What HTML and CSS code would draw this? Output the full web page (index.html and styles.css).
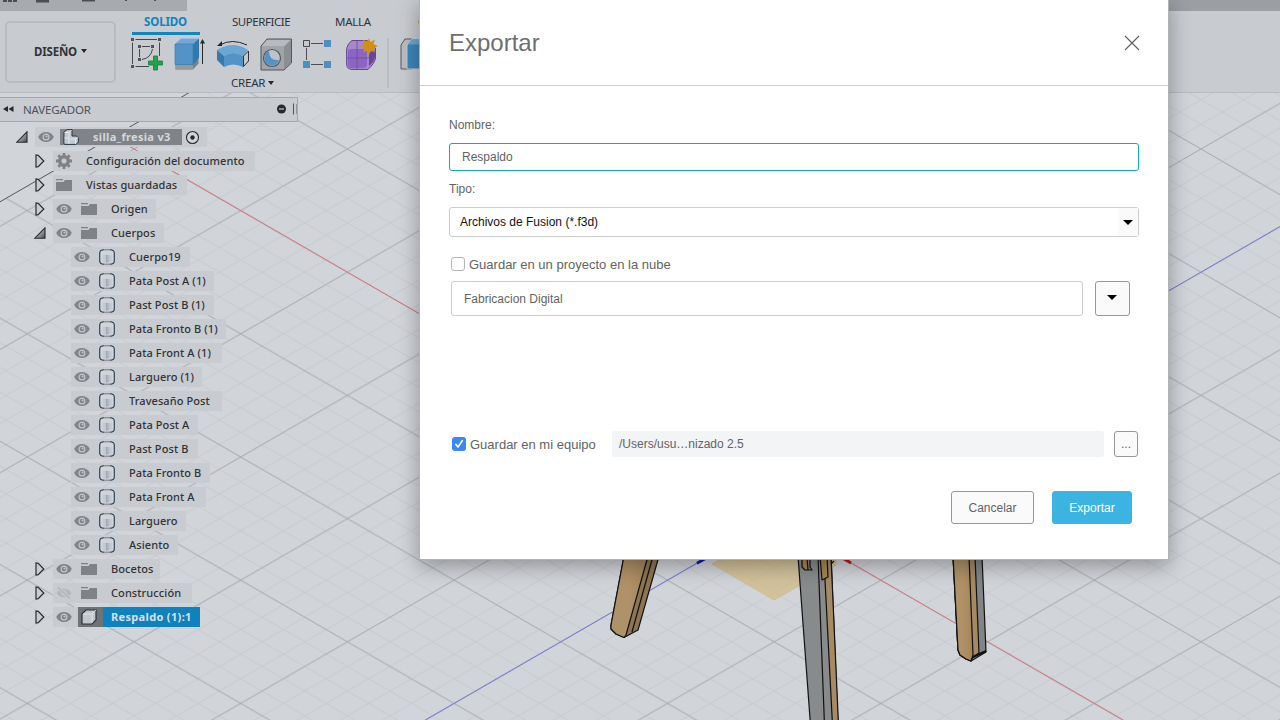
FILE: index.html
```html
<!DOCTYPE html>
<html lang="es">
<head>
<meta charset="utf-8">
<title>silla_fresia v3</title>
<link rel="stylesheet" href="styles.css">
</head>
<body>
<svg class="defs" width="0" height="0">
  <defs>
    <linearGradient id="tri" x1="0" y1="0" x2="1" y2="1"><stop offset=".3" stop-color="#c2c5ca"/><stop offset="1" stop-color="#45484c"/></linearGradient>
    <linearGradient id="cyl" x1="0" x2="1"><stop offset="0" stop-color="#c8ccd2"/><stop offset=".28" stop-color="#c2c6cd"/><stop offset=".3" stop-color="#98a2b0"/><stop offset=".8" stop-color="#c5cad0"/><stop offset="1" stop-color="#c8ccd2"/></linearGradient>
  </defs>
  <symbol id="eye" viewBox="0 0 16 12"><path d="M.2 6C3-.6 13-.6 15.800 6 13 12.600 3 12.600.2 6Z" fill="#808387"/><circle cx="8" cy="6" r="2.900" fill="none" stroke="#c3c6cb" stroke-width="1.200"/><circle cx="8.500" cy="5.500" r="1" fill="#c3c6cb"/></symbol>
  <symbol id="eye-off" viewBox="0 0 16 12"><path d="M.5 6C4 .3 12 .3 15.500 6 12 11.700 4 11.700.5 6Z" fill="#b4b7bb"/><circle cx="8" cy="6" r="2.400" fill="none" stroke="#c8cbd0"/><path d="M2 .5 14 11.500" stroke="#c8cbd0" stroke-width="3"/><path d="M2 .5 14 11.500" stroke="#b0b3b7" stroke-width="1.300"/></symbol>
  <symbol id="folder" viewBox="0 0 16 14"><path d="M0 1h7v1.300H0zM0 4h7.500L9 2h7v11H0z" fill="#7f8387"/></symbol>
  <symbol id="body" viewBox="0 0 16 16"><path d="M.7 3.500C.7 1.500 3 .7 8 .7s7.300.8 7.300 2.800v9c0 2-2.300 2.800-7.300 2.800S.7 14.500.7 12.500Z" fill="#ced3d9"/><path d="M4 5.500h9v8H4z" fill="url(#cyl)"/><path d="M1.500 2.500C1.500 1 14.500 1 14.500 2.500V5C13 6 3 6 1.500 5Z" fill="#d0d5da"/><path d="M5 .8h6M5 15.200h6" stroke="#777b80"/><path d="M5 .8C1.500 1 .7 2.200.7 4v8c0 1.800.8 3 4.300 3.200M11 .8c3.500.2 4.300 1.400 4.300 3.200v8c0 1.800-.8 3-4.300 3.200" fill="none" stroke="#29394a" stroke-width="1.100"/></symbol>
  <symbol id="closed" viewBox="0 0 10 14"><path d="M1 1v12l2.200-.3L8.800 7 3.200 1.300Z" fill="#c9ccd1" stroke="#292b2e" stroke-width="1.200"/></symbol>
  <symbol id="open" viewBox="0 0 12 12"><path d="M11 .8v10.400H.8Z" fill="url(#tri)" stroke="#292b2e" stroke-width="1.100"/></symbol>
</svg>

<svg class="scene" width="1280" height="720" viewBox="0 0 1280 720">
  <defs>
    <pattern id="minor" patternUnits="userSpaceOnUse" x="1201" y="149" width="42.680" height="24.640"><path d="M-10-5.773 53.360 30.810M-10 30.413 53.360-6.170M-10 5.773 10-5.773M32.680 30.413 52.680 18.870M-10 18.870 10 30.413M32.680-5.773 52.680 5.773" stroke="#c2c5c9" stroke-width=".75" fill="none"/></pattern>
    <pattern id="major" patternUnits="userSpaceOnUse" x="1201" y="149" width="213.400" height="123.200"><path d="M0 0 213.400 123.200M0 123.200 213.400 0" stroke="#a0a3a7" stroke-width=".8" fill="none"/></pattern>
    <clipPath id="plane"><path d="M0 201.800 350 0H1280V720H0Z"/></clipPath>
    <linearGradient id="wood"><stop stop-color="#ad926c"/><stop offset=".5" stop-color="#b19167"/><stop offset="1" stop-color="#a1845c"/></linearGradient>
  </defs>
  <g clip-path="url(#plane)">
    <rect width="1280" height="720" fill="url(#minor)"/>
    <rect width="1280" height="720" fill="url(#major)"/>
  </g>
  <path d="M0 201.800 192 91" stroke="#4a4c4f" stroke-width=".9"/>
  <path d="M113 136.800 1122.800 719.900" stroke="#d97277" stroke-width=".9"/>
  <path d="M425.400 720 1280 226.600" stroke="#7073de" stroke-width=".9"/>
  <path d="M697 563.200 708 557" stroke="#1414c4" stroke-width="3"/>
  <path d="M840 556.500 851 563" stroke="#c81414" stroke-width="3"/>
  <path d="M719 560 712 564 774 600 836 565V560Z" fill="#d4b774" opacity=".6" stroke="#d3ae67"/>
  <g stroke="#111" stroke-width="1.200" stroke-linejoin="round">
    <path d="M624 556 611 625 611 629 616 634 624 637.500 638 630 659 556Z" fill="#8e7552"/>
    <path d="M624 556 611 625 611 629 616 634 624 637.500 626 635 648 556Z" fill="url(#wood)"/>
    <path d="M653 556 632 632" fill="none"/>
    <path d="M953 556 958 650 960 655 966 659 971 661 986 652 982 556Z" fill="#828587"/>
    <path d="M953 556 958 650 960 655 966 659 971 661 973 657 979 653 975 556Z" fill="#a6895f"/>
    <path d="M953 556 958 650 960 655 966 659 971 661 973 655 969 556Z" fill="url(#wood)"/>
    <path d="M973 657 986 651" stroke-width="2"/>
    <path d="M798 556 810.500 725H838L831 556Z" fill="#888b8c"/>
    <path d="M825 580 832.500 725H838.500L831 556H826Z" fill="#a78a61"/>
    <path d="M818 556 824.500 725" fill="none"/>
    <path d="M802 556V567L805 570H812L810 567V556ZM820 556 822 580 828 577 827 556Z" fill="#a58653"/>
    <path d="M807 558 808 570M831 564 834 561" fill="none"/>
  </g>
</svg>

<div class="app">
  <div class="titlebar">
    <div class="quick">
      <svg width="187" height="11"><path d="M3 0h4v2H3zM8 0h4v2H8zM13 0h4v2h-4zM36 0h13v2.500H36zM82 0h13v1.500H82zM125 0h2v1h-2zM154 0h2v1h-2z" fill="#4b4d51"/></svg>
    </div>
    <div class="rest"></div>
  </div>
  <div class="ribbon">
    <div class="workspace">DISEÑO <i class="caret"></i></div>
    <div class="tools">
      <div class="tabs"><span class="tab active">SOLIDO</span><span class="tab t2">SUPERFICIE</span><span class="tab t3">MALLA</span><span class="tab t4">C</span></div>
      <div class="icons">
        <svg width="33" height="33" viewBox="0 0 33 33"><path d="M4.500 1.500H26M1.500 4.500V26M28.500 4.500V18M4.500 28.500H18" stroke="#44474b"/><path d="M8.500 11V19M11 8.500H19M21.500 11Q20 20 11 21.500" stroke="#44474b" fill="none"/><path d="M0 0h3v3H0zM27 0h3v3h-3zM0 27h3v3H0zM7 7h3v3H7zM20 7h3v3h-3zM7 20h3v3H7z" fill="#505358"/><path d="M22.500 18h4v5h5v4h-5v5h-4v-5h-5v-4h5z" fill="#26a04e" stroke="#128037" stroke-width=".8"/></svg>
        <svg width="33" height="33" viewBox="0 0 33 33"><path d="M1.500 26v5.500H19l5.500-6V21Z" fill="#7c7f83"/><path d="M1.500 27H19v4.500H1.500z" fill="#969a9e"/><path d="M1 6 7 .5H25L19 6Z" fill="#70a9d7"/><path d="M19 6 25 .5V20l-6 6.500Z" fill="#3178ae"/><path d="M1 6H19V26.500H1z" fill="#5393c6" stroke="#3e80b2" stroke-width=".7"/><path d="M28.500 3V26" stroke="#27292c"/><path d="M26 5.500h5L28.500 1z" fill="#27292c"/></svg>
        <svg width="33" height="33" viewBox="0 0 33 33"><path d="M0 12Q16 2 31 12L26 18Q16 12 7 18Z" fill="#6ba6d5"/><path d="M0 12 7 18V29L0 22Z" fill="#3978ac"/><path d="M7 18Q16 12 26 18V29Q16 24 7 29Z" fill="#5493c5"/><path d="M26.500 18 31.500 13V23L26.500 28.500Z" fill="#c7cacd" stroke="#303338"/><path d="M3 7Q15 0 30 7" fill="none" stroke="#222529"/><path d="M0 8 5 3V8Z" fill="#222529"/></svg>
        <svg width="33" height="33" viewBox="0 0 33 33"><path d="M1 8 7 1H31.500V25L24 32H1Z" fill="#a1a4a9" stroke="#53565a"/><path d="M24 9 31 2V25L24 31Z" fill="#8b8e93"/><path d="M2 8 7 2H30L24 8Z" fill="#b7babf"/><circle cx="12" cy="20" r="8.500" fill="#bfc3c9" stroke="#53565a" stroke-width="1.200"/><path d="M9 13A7.500 7.500 0 1 0 19 22Q9 23 9 13Z" fill="#5393c6"/></svg>
        <svg width="33" height="33" viewBox="0 0 33 33"><path d="M8 5.500H20M8 26.500H20M3.500 10V22" stroke="#4b4e52"/><path d="M.5 2.500h6v6h-6z" fill="#c6c9ce" stroke="#44474b"/><path d="M21 2h7v7h-7zM0 23h7v7H0zM21 23h7v7h-7z" fill="#4e8fc1"/></svg>
        <svg width="33" height="33" viewBox="0 0 33 33"><path d="M.6 12Q1 6 6 2.500H21L29.500 10V20Q29 25 22 31.500H6Q.6 31 .6 26Z" fill="#a788ca" stroke="#674497" stroke-width="1"/><path d="M2 14Q2 11 5 11H18Q21 11 21 14V27Q20 30 17 30H5Q2 30 2 26Z" fill="#8c65c4"/><path d="M23 15Q29 10 29 14V19Q28 24 23 28Z" fill="#68459c"/><path d="M11 3V31M1 20H22L29 14" stroke="#6c499e" fill="none" stroke-width=".8"/><path d="M23 0 24.500 4 29 1.500 27.500 6 32 8 27.500 10 29 14.500 24.500 12.500 23 17 21 12.500 17 14.500 18.500 10 14 8 18.500 6 17 1.500 21.500 4Z" fill="#d0910f"/></svg>
        <i class="divider"></i>
        <svg width="33" height="33" viewBox="0 0 33 33"><path d="M1 7 5 1H12V31H1Z" fill="#b9bcc0" stroke="#565a5e"/><path d="M7 7 12 1H24V31H7Z" fill="#3f85b9" stroke="#c8cbd0" stroke-width="1"/><path d="M8 6.500 12 1.500H24V6.500Z" fill="#6ba6d5"/></svg>
      </div>
      <div class="group">CREAR<i class="caret"></i></div>
    </div>
  </div>

  <div class="navhead">
    <svg width="12" height="8" viewBox="0 0 12 8"><path d="M5 1v6L0 4zM10.500 1v6l-5-3z" fill="#27292c"/></svg>
    <span>NAVEGADOR</span>
    <svg class="navctl" width="20" height="14" viewBox="0 0 20 14"><circle cx="6.500" cy="7" r="4.500" fill="#27292c"/><path d="M4 7h5" stroke="#c8cbd0" stroke-width="1.200"/><path d="M18.500 1.500v11" stroke="#505357"/></svg><i class="grip"></i>
  </div>

  <div class="tree">
    <div class="row root"><svg class="arrow" width="12" height="12"><use href="#open"/></svg><div class="bar" style="width:172px"><svg class="eye" width="16" height="12"><use href="#eye"/></svg><div class="rootname"><svg width="16" height="16" viewBox="0 0 16 16"><path d="M1 3 4 .6H9V7h4.500L15.400 9v4L13 15.400H1.500L.8 14Z" fill="#c3c9d0" stroke="#2b3541"/><path d="M1.500 3.500H6L8.500 1M6 4V15M1.500 9H6M7 10h5.500L15 8.500M12.500 10v5" fill="none" stroke="#edf0f3" stroke-width=".8"/></svg><b>silla_fresia v3</b></div><svg class="target" width="15" height="15" viewBox="0 0 15 15"><circle cx="7.500" cy="7.500" r="6" fill="#d3d6da" stroke="#27292c" stroke-width="1.100"/><circle cx="7.500" cy="7.500" r="2.200" fill="#27292c"/></svg></div></div>
    <div class="row l1"><svg class="arrow" width="10" height="14"><use href="#closed"/></svg><div class="bar" style="width:202px"><svg class="eye" width="16" height="16" viewBox="0 0 16 16"><circle cx="8" cy="8" r="4.300" fill="none" stroke="#7f8387" stroke-width="3.600"/><path d="M8 0v3M8 13v3M0 8h3M13 8h3M2.300 2.300l2.200 2.200M11.500 11.500l2.200 2.200M2.300 13.700l2.200-2.200M11.500 4.500l2.200-2.200" stroke="#7f8387" stroke-width="2.800"/></svg><span>Configuración del documento</span></div></div>
    <div class="row l1"><svg class="arrow" width="10" height="14"><use href="#closed"/></svg><div class="bar" style="width:134px"><svg class="eye" width="16" height="14"><use href="#folder"/></svg><span>Vistas guardadas</span></div></div>
    <div class="row l1"><svg class="arrow" width="10" height="14"><use href="#closed"/></svg><div class="bar" style="width:103px"><svg class="eye" width="16" height="12"><use href="#eye"/></svg><svg class="kind" width="16" height="14"><use href="#folder"/></svg><span>Origen</span></div></div>
    <div class="row l1"><svg class="arrow" width="12" height="12"><use href="#open"/></svg><div class="bar" style="width:111px"><svg class="eye" width="16" height="12"><use href="#eye"/></svg><svg class="kind" width="16" height="14"><use href="#folder"/></svg><span>Cuerpos</span></div></div>
    <div class="row l2"><div class="bar" style="width:119px"><svg class="eye" width="16" height="12"><use href="#eye"/></svg><svg class="kind" width="16" height="16"><use href="#body"/></svg><span>Cuerpo19</span></div></div>
    <div class="row l2"><div class="bar" style="width:143px"><svg class="eye" width="16" height="12"><use href="#eye"/></svg><svg class="kind" width="16" height="16"><use href="#body"/></svg><span>Pata Post A (1)</span></div></div>
    <div class="row l2"><div class="bar" style="width:143px"><svg class="eye" width="16" height="12"><use href="#eye"/></svg><svg class="kind" width="16" height="16"><use href="#body"/></svg><span>Past Post B (1)</span></div></div>
    <div class="row l2"><div class="bar" style="width:155px"><svg class="eye" width="16" height="12"><use href="#eye"/></svg><svg class="kind" width="16" height="16"><use href="#body"/></svg><span>Pata Fronto B (1)</span></div></div>
    <div class="row l2"><div class="bar" style="width:151px"><svg class="eye" width="16" height="12"><use href="#eye"/></svg><svg class="kind" width="16" height="16"><use href="#body"/></svg><span>Pata Front A (1)</span></div></div>
    <div class="row l2"><div class="bar" style="width:131px"><svg class="eye" width="16" height="12"><use href="#eye"/></svg><svg class="kind" width="16" height="16"><use href="#body"/></svg><span>Larguero (1)</span></div></div>
    <div class="row l2"><div class="bar" style="width:151px"><svg class="eye" width="16" height="12"><use href="#eye"/></svg><svg class="kind" width="16" height="16"><use href="#body"/></svg><span>Travesaño Post</span></div></div>
    <div class="row l2"><div class="bar" style="width:127px"><svg class="eye" width="16" height="12"><use href="#eye"/></svg><svg class="kind" width="16" height="16"><use href="#body"/></svg><span>Pata Post A</span></div></div>
    <div class="row l2"><div class="bar" style="width:127px"><svg class="eye" width="16" height="12"><use href="#eye"/></svg><svg class="kind" width="16" height="16"><use href="#body"/></svg><span>Past Post B</span></div></div>
    <div class="row l2"><div class="bar" style="width:139px"><svg class="eye" width="16" height="12"><use href="#eye"/></svg><svg class="kind" width="16" height="16"><use href="#body"/></svg><span>Pata Fronto B</span></div></div>
    <div class="row l2"><div class="bar" style="width:135px"><svg class="eye" width="16" height="12"><use href="#eye"/></svg><svg class="kind" width="16" height="16"><use href="#body"/></svg><span>Pata Front A</span></div></div>
    <div class="row l2"><div class="bar" style="width:115px"><svg class="eye" width="16" height="12"><use href="#eye"/></svg><svg class="kind" width="16" height="16"><use href="#body"/></svg><span>Larguero</span></div></div>
    <div class="row l2"><div class="bar" style="width:107px"><svg class="eye" width="16" height="12"><use href="#eye"/></svg><svg class="kind" width="16" height="16"><use href="#body"/></svg><span>Asiento</span></div></div>
    <div class="row l1"><svg class="arrow" width="10" height="14"><use href="#closed"/></svg><div class="bar" style="width:107px"><svg class="eye" width="16" height="12"><use href="#eye"/></svg><svg class="kind" width="16" height="14"><use href="#folder"/></svg><span>Bocetos</span></div></div>
    <div class="row l1"><svg class="arrow" width="10" height="14"><use href="#closed"/></svg><div class="bar" style="width:139px"><svg class="eye" width="16" height="12"><use href="#eye-off"/></svg><svg class="kind" width="16" height="14"><use href="#folder"/></svg><span>Construcción</span></div></div>
    <div class="row l1"><svg class="arrow" width="10" height="14"><use href="#closed"/></svg><div class="bar" style="width:147px"><svg class="eye" width="16" height="12"><use href="#eye"/></svg><div class="selicon"><svg width="16" height="16" viewBox="0 0 16 16"><path d="M1 5 5 1H15V11L11 15H1Z" fill="#c3c8d0" stroke="#2d3239" stroke-width="1.200"/><path d="M2 5H11L15 1M11 5V14" stroke="#e3e6eb" fill="none" stroke-width=".8"/></svg></div><b class="selname">Respaldo (1):1</b></div></div>
  </div>
</div>

<div class="dialog">
  <div class="dhead"><h1>Exportar</h1><svg width="16" height="16" viewBox="0 0 16 16"><path d="M1 1 15 15M15 1 1 15" stroke="#5e5e5e" stroke-width="1.100"/></svg></div>
  <div class="dbody">
    <div class="label">Nombre:</div>
    <div class="field name">Respaldo</div>
    <div class="label tipo">Tipo:</div>
    <div class="field select"><span>Archivos de Fusion (*.f3d)</span><div class="drop"><i class="caret big"></i></div></div>
    <div class="check"><i class="box"></i>Guardar en un proyecto en la nube</div>
    <div class="cloud"><div class="field project">Fabricacion Digital</div><div class="button picker"><i class="caret big"></i></div></div>
    <div class="local"><svg width="14" height="14" viewBox="0 0 14 14"><rect width="14" height="14" rx="3" fill="#3b86f8"/><path d="M3.700 7.300 6 10 10.300 3.700" fill="none" stroke="#fff" stroke-width="1.600" stroke-linecap="round"/></svg><span class="locallabel">Guardar en mi equipo</span><div class="path">/Users/usu…nizado 2.5</div><div class="button more">...</div></div>
    <div class="actions"><div class="button cancel">Cancelar</div><div class="button primary">Exportar</div></div>
  </div>
</div>
</body>
</html>
```

FILE: styles.css
```css
* { box-sizing: border-box; }
html, body { margin: 0; width: 1280px; height: 720px; overflow: hidden; }
body { position: relative; background: #d1d4d9; font-family: "Noto Sans", "Open Sans", sans-serif; color: #303337; }
svg { display: block; flex: none; }
.defs { position: absolute; }
.scene { position: absolute; top: 0; left: 0; }
.app { position: relative; }
.caret { display: inline-block; border: 3.500px solid transparent; border-top: 4.500px solid #27292c; border-bottom: 0; }
.caret.big { border-width: 5px 5px 0; border-top-color: #000; }

.titlebar { display: flex; height: 11px; background: #c8cbd0; justify-content: space-between; }
.quick { width: 187px; background: #a7aaae; }
.rest { width: 120px; background: #9b9ea2; }

.ribbon { display: flex; height: 82px; background: #c8cbd0; border-bottom: 1px solid #b7babe; padding-left: 5px; }
.workspace { width: 111px; height: 62px; margin-top: 10px; border: 2px solid #b8bbc0; border-radius: 5px; display: flex; align-items: center; justify-content: center; gap: 4px; font-size: 11.500px; font-weight: 700; padding-bottom: 2px; letter-spacing: -.2px; }
.tools { padding-left: 15px; }
.tabs { display: flex; height: 24px; font-size: 11.500px; line-height: 21px; white-space: nowrap; }
.tab { flex: none; }
.active { width: 68px; margin-left: 1px; color: #0f84bf; font-weight: 700; font-size: 11.500px; border-bottom: 3px solid #1384bd; padding-left: 12px; letter-spacing: -.15px; }
.t2 { width: 103px; margin-left: 32px; letter-spacing: -.45px; }
.t3 { width: 83px; letter-spacing: -.25px; }
.icons { display: flex; gap: 10px; padding-top: 3px; height: 39px; align-items: flex-start; }
.divider { width: 2px; height: 50px; background: #b8bbc0; margin: 0 1px 0 -2px; }
.group { padding-left: 100px; line-height: 18px; font-size: 11.500px; display: flex; align-items: center; gap: 3px; letter-spacing: -.2px; }

.navhead { margin-top: 4px; width: 298px; height: 25px; border: 1px solid #a5a8ac; border-left: 0; background: #c8cbd0; display: flex; align-items: center; font-size: 11.500px; color: #505357; padding: 0 0 1px 3px; }
.navhead span { margin-left: 8px; letter-spacing: -.15px; }
.navctl { margin-left: auto; }
.grip { width: 1px; height: 10px; border-left: 1px solid #95989c; margin-left: 1px; }

.tree { padding-top: 5px; font-size: 11px; letter-spacing: .09px; font-weight: 500; }
.row { height: 20px; margin-bottom: 4px; display: flex; align-items: center; justify-content: flex-start; white-space: nowrap; }
.bar { height: 20px; background: #c8cbd0; display: flex; align-items: center; padding-left: 3px; }
.root { padding-left: 16px; }
.root .bar { margin-left: 7px; }
.l1 { padding-left: 34px; }
.l1 .arrow { width: 12px; }
.l1 .bar { margin-left: 7px; }
.l2 { padding-left: 71px; }
.kind { margin-left: 9px; }
.bar span { margin-left: 14px; padding-bottom: 2px; }
.rootname { width: 122px; height: 16px; margin-left: 6px; background: #808488; color: #d5d8dc; display: flex; align-items: center; padding-left: 3px; }
.rootname b { margin-left: 14px; padding-bottom: 2px; letter-spacing: .32px; }
.target { margin-left: 3px; }
.selicon { width: 25px; height: 20px; margin-left: 6px; background: #6f7276; display: flex; align-items: center; padding-left: 3px; }
.selname { flex: 1; height: 20px; line-height: 20px; padding-left: 8px; background: #0f82bd; color: #d8e0e6; letter-spacing: .34px; }

.dialog { position: absolute; left: 419px; top: -2px; width: 750px; height: 562px; background: #fff; border: 1px solid #b2b2b3; box-shadow: 0 6px 20px rgba(0,0,0,.32); font-family: "Liberation Sans", Arial, sans-serif; font-size: 12px; color: #636363; }
.dhead { height: 87px; border-bottom: 1px solid #ccc; display: flex; align-items: center; justify-content: space-between; padding: 1px 28px 0 29px; }
.dhead h1 { margin: 0; font-size: 24px; font-weight: 400; color: #6f6f6f; }
.dbody { padding: 32px 29px 0; }
.label { height: 14px; line-height: 14px; }
.field { border: 1px solid #cbcbcb; border-radius: 3px; display: flex; align-items: center; }
.name { height: 28px; margin-top: 11px; border-color: #0ea5da; padding-left: 12px; }
.tipo { margin-top: 11px; }
.select { height: 30px; margin-top: 11px; padding-left: 10px; color: #111; justify-content: space-between; }
.drop { width: 20px; height: 28px; background: #fafafa; display: flex; align-items: center; justify-content: center; }
.check { margin: 20px 0 0 2px; display: flex; align-items: center; gap: 4px; font-size: 13px; height: 15px; }
.box { width: 14px; height: 14px; margin-bottom: 1px; border: 1px solid #b4b4b4; border-radius: 3px; }
.cloud { margin: 9px 0 0 2px; display: flex; gap: 12px; height: 35px; }
.project { width: 632px; padding-left: 12px; }
.button { border: 1px solid #989898; border-radius: 3px; background: #fafafa; display: flex; align-items: center; justify-content: center; }
.picker { width: 35px; padding-right: 2px; padding-bottom: 2px; }
.local { display: flex; align-items: center; margin: 115px 0 0 3px; height: 26px; }
.locallabel { width: 142px; margin-left: 4px; font-size: 13px; }
.path { width: 492px; height: 26px; line-height: 26px; background: #f3f4f6; border-radius: 3px; padding-left: 7px; }
.more { width: 24px; height: 26px; margin-left: 10px; }
.actions { display: flex; gap: 18px; justify-content: flex-end; margin: 34px 7px 0 0; }
.cancel { width: 83px; height: 33px; }
.primary { width: 80px; height: 33px; background: #3bb4e2; border-color: #3bb4e2; color: #fff; }
```
